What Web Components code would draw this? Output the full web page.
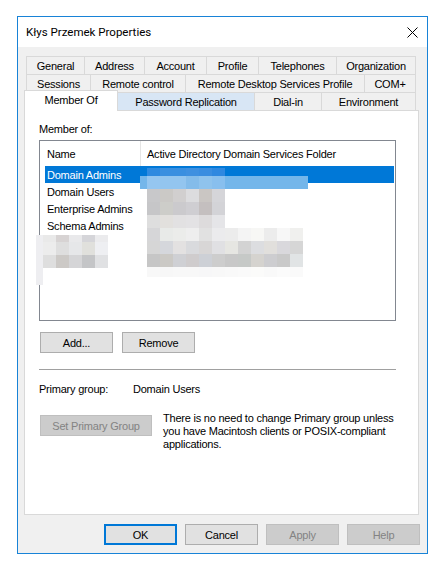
<!DOCTYPE html>
<html><head><meta charset="utf-8"><style>
html,body{margin:0;background:#fff}
body{font:11px/13px "Liberation Sans",Arial,sans-serif;letter-spacing:-.22px;color:#000}
</style></head><body>
<x-dialog caption="Kłys Przemek Properties">
  <x-tabstrip slot="tabs">
    <x-tabrow><x-tab w="59">General</x-tab><x-tab w="60">Address</x-tab><x-tab w="62">Account</x-tab><x-tab w="52">Profile</x-tab><x-tab w="78">Telephones</x-tab><x-tab w="79">Organization</x-tab></x-tabrow>
    <x-tabrow><x-tab w="65">Sessions</x-tab><x-tab w="95">Remote control</x-tab><x-tab w="179">Remote Desktop Services Profile</x-tab><x-tab w="51">COM+</x-tab></x-tabrow>
    <x-tabrow third><x-tab w="94" active>Member Of</x-tab><x-tab w="137" hot>Password Replication</x-tab><x-tab w="67">Dial-in</x-tab><x-tab w="94">Environment</x-tab></x-tabrow>
  </x-tabstrip>
  <x-panel slot="panel">
    <x-label style="height:13px;margin-top:12px">Member of:</x-label>
    <x-listbox style="margin-top:4px">
      <x-item>Domain Admins</x-item><x-item>Domain Users</x-item><x-item>Enterprise Admins</x-item><x-item>Schema Admins</x-item>
    </x-listbox>
    <x-row style="margin:11px 0 0 1px;gap:9px"><x-btn>Add...</x-btn><x-btn>Remove</x-btn></x-row>
    <x-rule style="margin-top:16px"></x-rule>
    <x-row style="margin-top:13px;line-height:13px"><x-label style="width:94px">Primary group:</x-label><x-label>Domain Users</x-label></x-row>
    <x-row style="margin:19px 0 0 1px;gap:11px;align-items:flex-start"><x-btn w="112" disabled>Set Primary Group</x-btn><x-label style="margin-top:-3px;width:240px">There is no need to change Primary group unless you have Macintosh clients or POSIX-compliant applications.</x-label></x-row>
    <x-mosaic style="left:115px;top:65px;width:168px;height:13px;background:#74b6ea"></x-mosaic>
    <x-mosaic style="left:122px;top:57px" rows="8,13,13,13,13,13,13,13,10" data="2f8ae0 3a8fe0 3a8fe0 3f90e0 3a8de0 2f88e0|95c6f0 93c5ef 93c5ef 84bcea 8fc3ed 88bfee|c8c8ca cbc9c6 d1cfcf dcdcde cac6c3 d5d5d9|c6c6c8 cdcdc9 cbcacd cfced2 c4bfbf d3d3d7|dedede e2e0dd e2e1e2 e3e2e4 dddbdc e5e5e8|d6d6d8 e8eae8 ebecea eeeeee e1e1e1 ebebed ececec f4f4f4 f7f7f5 ececec f7f7f7 f0f0ee|d6d6d6 d5d7dc e3e1e1 d9dadd d8d6d6 e0e0e3 e6e6e2 d3d3d3 dcdde0 e1dfdc d9d8dc d6d6d6|c6c6c6 cbc9c5 cfd0d4 cfcccd cdd0d6 cdcdcd c8c8c8 c6c9c7 d5d3cf cdcdd0 c9c9c9 e1e4e5|f8f8f8 f7f7f7 f8f8f8 f8f8f8 f7f7f8 f8f8f8 f9f9f9 fafafa fbfbfa f9f9f9 fbfbfb fafafa"></x-mosaic>
    <x-mosaic style="left:18px;top:124px" rows="7,13,13" data="e9e9e9 d7d3d3 e9e9eb d5d5d9 ebebed|ececec dedede e6e7e9 e0e0dc eeeff2|dedede ccc9c6 d5d5d7 c4c5c7 e0e1e3"></x-mosaic>
    <x-mosaic style="left:11px;top:124px;width:7px;height:50px;background:#eeeef1"></x-mosaic>
  </x-panel>
  <x-btn slot="actions" focus>OK</x-btn><x-btn slot="actions">Cancel</x-btn><x-btn slot="actions" disabled>Apply</x-btn><x-btn slot="actions" disabled>Help</x-btn>
</x-dialog>
<script>
function def(name,css,html,extra){
  customElements.define(name,class extends HTMLElement{
    constructor(){super();const r=this.attachShadow({mode:'open'});r.innerHTML='<style>'+css+'</style>'+html;}
    connectedCallback(){extra&&extra(this)}
  });
}
def('x-dialog',`
:host{display:flex;flex-direction:column;box-sizing:border-box;width:411px;height:538px;margin:16px 0 0 17px;border:1px solid #1883d7;background:#f0f0f0}
.title{height:30px;background:#fff;display:flex;align-items:center;justify-content:space-between;padding:0 9px 0 8px;font:11.5px/13px Roboto,sans-serif;letter-spacing:0}
.title svg{display:block}
.tabs{padding:9px 0 0 8px}
.panel{margin-left:6px}
.actions{display:flex;gap:8px;margin:9px 0 0 86px}
`,`<div class="title"><span id="cap"></span><svg width="11" height="11" viewBox="0 0 11 11"><path d="M.5.5l10 10M10.5.5l-10 10" stroke="#000" stroke-width="1" fill="none"/></svg></div>
<div class="tabs"><slot name="tabs"></slot></div>
<div class="panel"><slot name="panel"></slot></div>
<div class="actions"><slot name="actions"></slot></div>`,el=>{el.shadowRoot.getElementById('cap').textContent=el.getAttribute('caption')});
def('x-tabstrip',':host{display:block}','<slot></slot>');
def('x-tabrow',`:host{display:flex;align-items:flex-end;height:18px}
:host([third]){margin-left:-2px;position:relative;z-index:2}`,'<slot></slot>');
def('x-tab',`:host{display:block;box-sizing:border-box;height:18px;border:1px solid #d9d9d9;border-left-width:0;border-bottom-width:0;background:#f0f0f0;text-align:center;line-height:19px;white-space:nowrap;flex:none}
:host(:first-child){border-left-width:1px}
:host([hot]){background:#d8e6f5;border-right-color:#d9d9d9}
:host([active]){height:21px;margin-bottom:-1px;background:#fff;line-height:18px;position:relative;z-index:3;border-bottom:0}`,'<slot></slot>',el=>{if(el.hasAttribute('w'))el.style.width=el.getAttribute('w')+'px'});
def('x-panel',`:host{display:block;position:relative;box-sizing:border-box;width:395px;height:405px;background:#fff;border:1px solid #d9d9d9;padding:0 0 0 14px}`,'<slot></slot>');
def('x-label',':host{display:block;white-space:normal}','<slot></slot>');
def('x-listbox',`:host{display:block;box-sizing:border-box;width:357px;height:181px;border:1px solid #828790;background:#fff;position:relative}
.head{display:flex;height:25px;line-height:26px}
.head span:first-child{width:101px;padding-left:7px;box-sizing:border-box;border-right:1px solid #e5e5e5;height:25px}
.head span+span{padding-left:6px}
.items{margin:0 1px 0 5px}`,`<div class="head"><span>Name</span><span>Active Directory Domain Services Folder</span></div><div class="items"><slot></slot></div>`);
def('x-item',`:host{display:block;height:17px;line-height:19px;padding-left:2px}
:host(:first-child){background:#0078d7;color:#fff}`,'<slot></slot>');
def('x-row',':host{display:flex}','<slot></slot>');
def('x-rule',':host{display:block;width:357px;height:1px;background:#a0a0a0}','');
def('x-btn',`:host{display:block;box-sizing:border-box;width:73px;height:21px;border:1px solid #adadad;background:#e1e1e1;text-align:center;line-height:21px;flex:none;white-space:nowrap}
:host([disabled]){background:#ccc;border-color:#bfbfbf;color:#838383}
:host([focus]){border:2px solid #0078d7;line-height:19px}`,'<slot></slot>',el=>{if(el.hasAttribute('w'))el.style.width=el.getAttribute('w')+'px'});
def('x-mosaic',`:host{display:block;position:absolute}
.r{display:flex}.r i{display:block;width:13px;height:100%}`,'<div id="m"></div>',el=>{
  const d=el.getAttribute('data');if(!d)return;
  const hs=el.getAttribute('rows').split(',');const m=el.shadowRoot.getElementById('m');
  d.split('|').forEach((row,i)=>{const r=document.createElement('div');r.className='r';r.style.height=hs[i]+'px';
    row.split(' ').forEach(c=>{const s=document.createElement('i');s.style.background='#'+c;r.appendChild(s)});m.appendChild(r)});
});
</script>
</body></html>
